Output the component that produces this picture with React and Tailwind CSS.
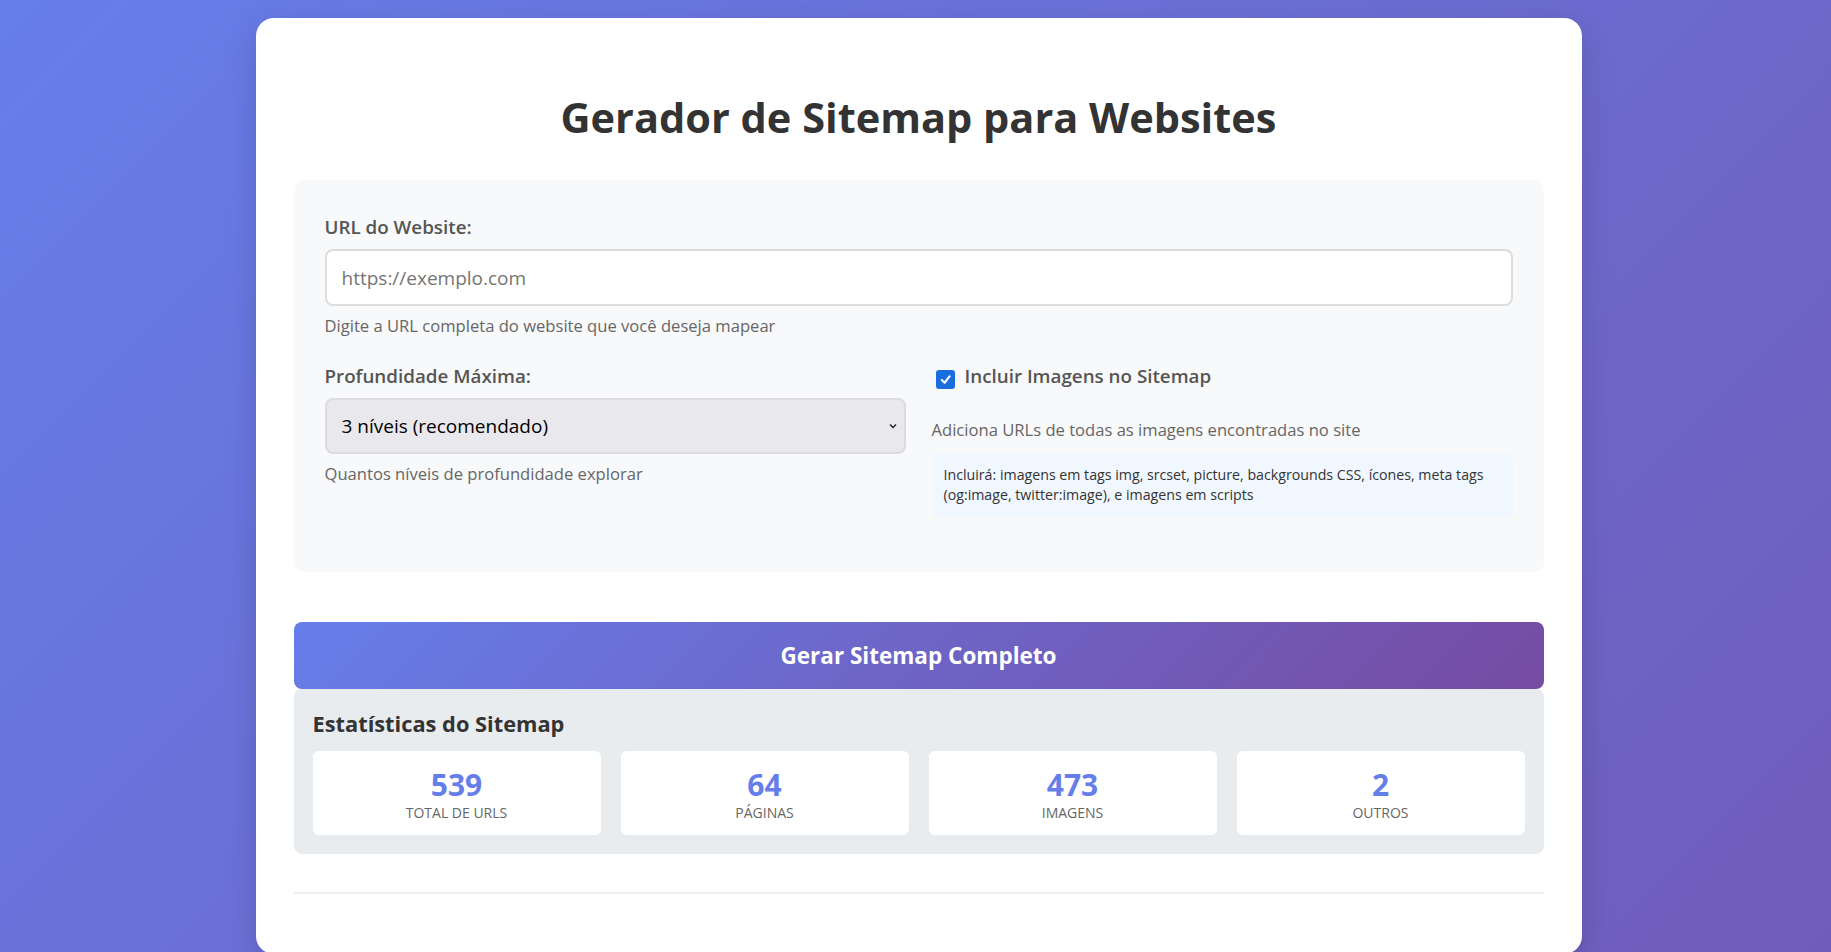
import { useState } from 'react';

const stats = [
    { value: '539', label: 'Total de URLs' },
    { value: '64', label: 'Páginas' },
    { value: '473', label: 'Imagens' },
    { value: '2', label: 'Outros' },
];

export default function App() {
    const [url, setUrl] = useState('');
    const [depth, setDepth] = useState('3');
    const [includeImages, setIncludeImages] = useState(true);

    return (
        <div
            className="h-screen overflow-hidden bg-[linear-gradient(135deg,#667eea_0%,#764ba2_150%)] pl-[6px] pt-[18px] text-[#333]"
            style={{ fontFamily: '"Open Sans", "Noto Sans", sans-serif' }}
        >
            <div className="mx-auto w-[1326px] rounded-[18px] bg-white px-[38px] pt-[75px] pb-[60px] shadow-[0_10px_30px_rgba(0,0,0,0.15)]">
                <h1 className="mb-[39px] text-center text-[41.5px] font-bold leading-[48px] text-[#333]">
                    Gerador de Sitemap para Websites
                </h1>

                <div className="rounded-[10px] bg-[#f8f9fa] px-[31px] pt-[35px] pb-[55px]">
                    <label className="mb-[10px] block text-[18.8px] font-semibold leading-[24px] text-[#555]">
                        URL do Website:
                    </label>
                    <input
                        type="url"
                        value={url}
                        onChange={(e) => setUrl(e.target.value)}
                        placeholder="https://exemplo.com"
                        className="block h-[57px] w-full rounded-[8px] border-2 border-[#ddd] bg-white px-[15px] text-[19px] text-[#333] outline-none placeholder:text-[#757575]"
                    />
                    <p className="mt-[10px] text-[16.6px] leading-[20px] text-[#666]">
                        Digite a URL completa do website que você deseja mapear
                    </p>

                    <div className="mt-[28px] grid grid-cols-2 gap-[26px]">
                        <div>
                            <label className="mb-[10px] block text-[18.8px] font-semibold leading-[24px] text-[#555]">
                                Profundidade Máxima:
                            </label>
                            <div className="relative">
                                <select
                                    value={depth}
                                    onChange={(e) => setDepth(e.target.value)}
                                    className="block h-[56px] w-full appearance-none rounded-[8px] border-2 border-[#dcdce0] bg-[#e9e9ed] px-[15px] text-[19px] text-black outline-none"
                                    style={{ fontFamily: 'inherit' }}
                                >
                                    <option value="1">1 nível</option>
                                    <option value="2">2 níveis</option>
                                    <option value="3">3 níveis (recomendado)</option>
                                    <option value="4">4 níveis</option>
                                    <option value="5">5 níveis</option>
                                </select>
                                <svg
                                    className="pointer-events-none absolute right-[8px] top-1/2 -translate-y-1/2"
                                    width="10"
                                    height="10"
                                    viewBox="0 0 10 10"
                                >
                                    <path d="M2 3.5 L5 6.5 L8 3.5" fill="none" stroke="#222" strokeWidth="1.4" />
                                </svg>
                            </div>
                            <p className="mt-[10px] text-[16.6px] leading-[20px] text-[#666]">
                                Quantos níveis de profundidade explorar
                            </p>
                        </div>

                        <div>
                            <label
                                className="flex h-[24px] cursor-pointer items-center gap-[10px] pl-[4px] text-[18.8px] font-semibold text-[#555]"
                                onClick={() => setIncludeImages(!includeImages)}
                            >
                                <span
                                    className={`mt-[6px] flex h-[19px] w-[19px] shrink-0 items-center justify-center rounded-[3px] ${
                                        includeImages ? 'bg-[#1a6ddf]' : 'border-2 border-[#767676] bg-white'
                                    }`}
                                >
                                    {includeImages && (
                                        <svg width="13" height="13" viewBox="0 0 14 14">
                                            <path
                                                d="M3 7.5 L6 10.5 L11.5 3.5"
                                                fill="none"
                                                stroke="white"
                                                strokeWidth="2.2"
                                                strokeLinecap="round"
                                                strokeLinejoin="round"
                                            />
                                        </svg>
                                    )}
                                </span>
                                Incluir Imagens no Sitemap
                            </label>
                            <p className="mt-[32px] text-[16.6px] leading-[20px] text-[#666]">
                                Adiciona URLs de todas as imagens encontradas no site
                            </p>
                            <div className="mt-[13px] rounded-[6px] bg-[#f0f7ff] p-[12px] text-[14.2px] leading-[20px] text-[#333]">
                                Incluirá: imagens em tags img, srcset, picture, backgrounds CSS, ícones, meta tags
                                (og:image, twitter:image), e imagens em scripts
                            </div>
                        </div>
                    </div>
                </div>

                <button className="mt-[50px] block h-[67px] w-full rounded-[8px] bg-[linear-gradient(135deg,#667eea_0%,#764ba2_100%)] text-[22.5px] font-bold text-white">
                    Gerar Sitemap Completo
                </button>

                <div className="rounded-[8px] bg-[#e9ecef] px-[19px] pt-[20px] pb-[19px]">
                    <h3 className="mb-[12px] text-[21.8px] font-bold leading-[30px] text-[#333]">
                        Estatísticas do Sitemap
                    </h3>
                    <div className="grid grid-cols-4 gap-[20px]">
                        {stats.map((s) => (
                            <div
                                key={s.label}
                                className="rounded-[6px] bg-white pt-[16px] pb-[12px] text-center"
                            >
                                <div className="text-[30px] font-bold leading-[36px] text-[#667eea]">
                                    {s.value}
                                </div>
                                <div className="text-[14px] uppercase leading-[20px] text-[#666]">
                                    {s.label}
                                </div>
                            </div>
                        ))}
                    </div>
                </div>

                <div className="mt-[38px] border-t-2 border-[#eee]" />
            </div>
        </div>
    );
}
